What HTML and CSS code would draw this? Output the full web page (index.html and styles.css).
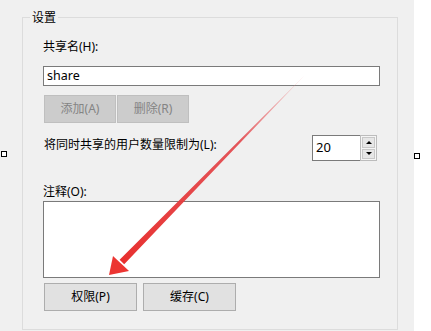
FILE: index.html
```html
<!DOCTYPE html>
<html lang="zh-CN">
<head>
<meta charset="utf-8">
<title>设置</title>
<link rel="stylesheet" href="styles.css">
</head>
<body>
<div class="window">
  <fieldset class="group">
    <legend class="group-title">设置</legend>
    <div class="label label-name">共享名(H):</div>
    <div class="input">share</div>
    <div class="btn-row">
      <button class="btn btn-disabled">添加(A)</button>
      <button class="btn btn-disabled">删除(R)</button>
    </div>
    <div class="limit-row">
      <span class="label limit-label">将同时共享的用户数量限制为(L):</span>
      <div class="spin">
        <span class="spin-value">20</span>
        <div class="spin-btns">
          <span class="spin-btn"><span class="tri-up"></span></span>
          <span class="spin-btn"><span class="tri-down"></span></span>
        </div>
      </div>
    </div>
    <div class="label label-comment">注释(O):</div>
    <div class="textarea"></div>
    <div class="btn-row btn-row-bottom">
      <button class="btn btn-normal">权限(P)</button>
      <button class="btn btn-normal">缓存(C)</button>
    </div>
  </fieldset>
  <span class="handle handle-left"></span>
  <span class="handle handle-right"></span>
  <svg class="arrow" width="431" height="331" viewBox="0 0 431 331">
    <defs>
      <linearGradient id="shaft" gradientUnits="userSpaceOnUse" x1="304" y1="76" x2="121" y2="262">
        <stop offset="0" stop-color="#f08a8c" stop-opacity="0.25"/>
        <stop offset="0.35" stop-color="#e2454a" stop-opacity="0.9"/>
        <stop offset="1" stop-color="#e8302f" stop-opacity="1"/>
      </linearGradient>
    </defs>
    <polygon points="304,76 303.4,76.6 119.6,259.8 124.2,264.2" fill="url(#shaft)"/>
    <polygon points="109,275 113,256 129,271" fill="#ec3532"/>
  </svg>
</div>
</body>
</html>
```

FILE: styles.css
```css
html, body {
  margin: 0;
  padding: 0;
  background: #ffffff;
}

body {
  font-family: "Noto Sans", "Noto Sans CJK SC", sans-serif;
  font-size: 12px;
  color: #000;
}

.window {
  position: relative;
  width: 414px;
  height: 331px;
  background: #f0f0f0;
  padding-top: 10px;
  box-sizing: border-box;
  overflow: visible;
}

.group {
  margin: 0 0 0 22px;
  width: 376px;
  box-sizing: border-box;
  border: 1px solid #dcdcdc;
  padding: 0 17px 18px 20px;
  min-width: 0;
}

.group-title {
  padding: 0 2px;
  margin-left: -13px;
  line-height: 15px;
  font-size: 12px;
}

.label {
  line-height: 16px;
  white-space: nowrap;
}

.label-name {
  margin-top: 14px;
}

.input {
  margin-top: 11px;
  height: 20px;
  box-sizing: border-box;
  border: 1px solid #7a7a7a;
  background: #fff;
  padding-left: 3px;
  line-height: 18px;
  font-size: 12.5px;
}

.btn-row {
  display: flex;
  gap: 1px;
  margin-top: 9px;
  padding-left: 1px;
}

.btn {
  font-family: inherit;
  font-size: 12px;
  height: 28px;
  box-sizing: border-box;
  padding: 0;
  margin: 0;
  line-height: 16px;
}

.btn-disabled {
  width: 72px;
  background: #cccccc;
  border: 1px solid #bfbfbf;
  color: #848484;
}

.btn-normal {
  width: 93px;
  background: #e1e1e1;
  border: 1px solid #adadad;
  color: #000;
}

.btn-row-bottom {
  margin-top: 5px;
  gap: 6px;
}

.limit-row {
  display: flex;
  justify-content: space-between;
  align-items: flex-start;
  margin-top: 12px;
  padding-left: 1px;
}

.limit-label {
  margin-top: 2px;
}

.spin {
  display: flex;
  width: 65px;
  height: 26px;
  margin-right: 3px;
  box-sizing: border-box;
}

.spin-value {
  width: 48px;
  box-sizing: border-box;
  border: 1px solid #7a7a7a;
  border-right: none;
  background: #fff;
  padding-left: 3px;
  line-height: 22px;
  font-size: 13px;
}

.spin-btns {
  width: 17px;
  box-sizing: border-box;
  border: 1px solid #bcbcbc;
  background: #f5f5f5;
  display: flex;
  flex-direction: column;
  padding: 1px;
  gap: 1px;
}

.spin-btn {
  flex: 1;
  background: #e6e6e6;
  border: 1px solid #c8c8c8;
  display: flex;
  align-items: center;
  justify-content: center;
}

.tri-up {
  width: 0;
  height: 0;
  border-left: 3px solid transparent;
  border-right: 3px solid transparent;
  border-bottom: 3px solid #000;
}

.tri-down {
  width: 0;
  height: 0;
  border-left: 3px solid transparent;
  border-right: 3px solid transparent;
  border-top: 3px solid #000;
}

.label-comment {
  margin-top: 23px;
}

.textarea {
  margin-top: 1px;
  height: 77px;
  box-sizing: border-box;
  border: 1px solid #7a7a7a;
  background: #fff;
}

.handle {
  position: absolute;
  width: 6px;
  height: 6px;
  box-sizing: border-box;
  border: 1px solid #000;
  background: #fff;
}

.handle-left {
  left: 1px;
  top: 151px;
}

.handle-right {
  left: 414px;
  top: 153px;
}

.arrow {
  position: absolute;
  left: 0;
  top: 0;
  pointer-events: none;
}
```
